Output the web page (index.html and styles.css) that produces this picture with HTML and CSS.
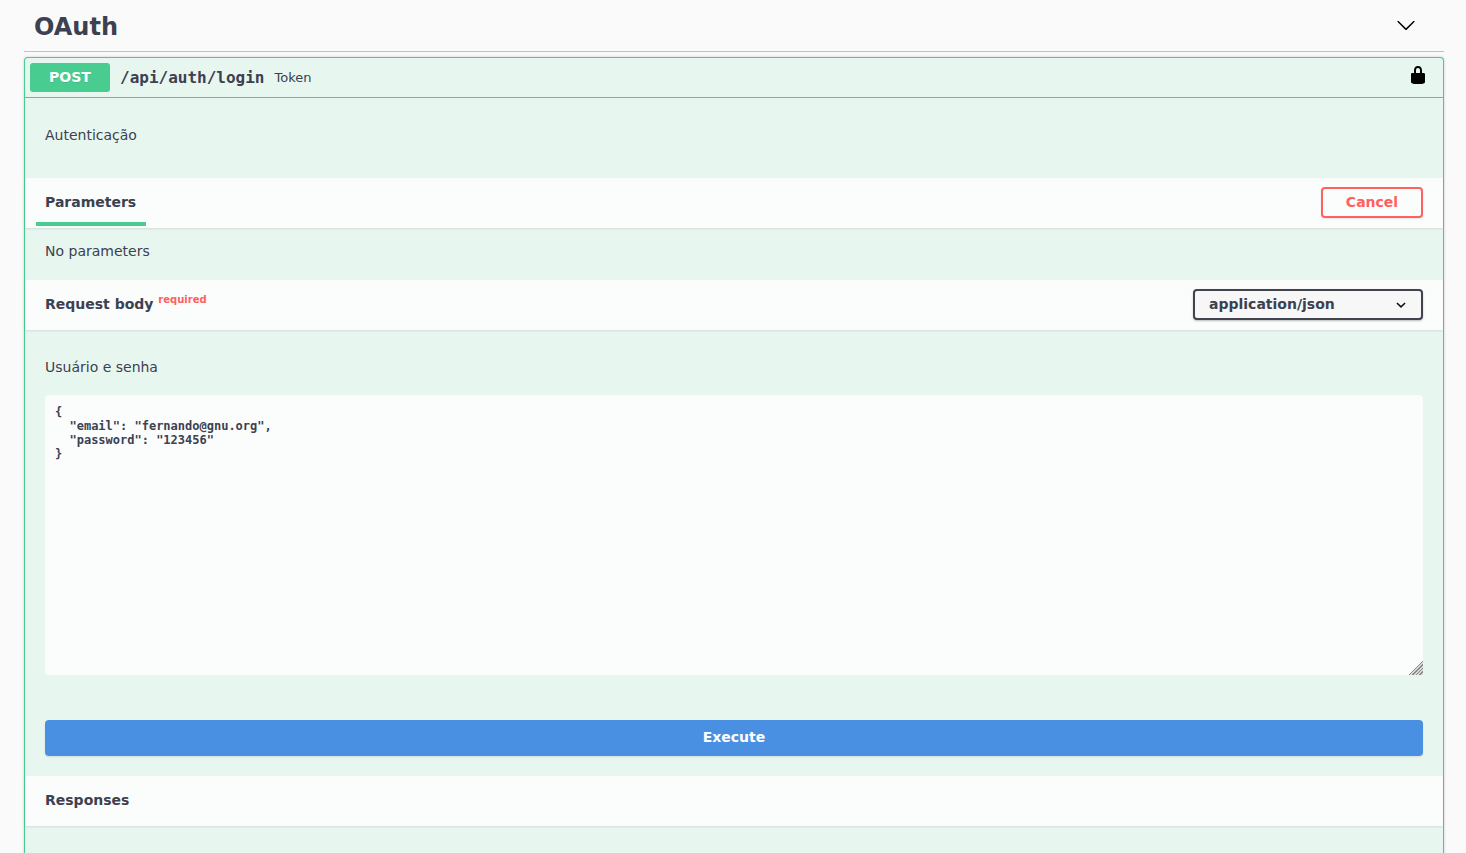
FILE: index.html
```html
<!DOCTYPE html>
<html lang="pt">
<head>
<meta charset="utf-8">
<title>OAuth</title>
<link rel="stylesheet" href="styles.css">
</head>
<body>
<main class="wrapper">
  <header class="tag">
    <h3 class="tag-title">OAuth</h3>
    <svg class="tag-arrow" viewBox="0 0 20 20" width="20" height="20"><path d="M17.418 6.109c.272-.268.709-.268.979 0s.271.701 0 .969l-7.908 7.83c-.27.268-.707.268-.979 0l-7.908-7.83c-.27-.268-.27-.701 0-.969.271-.268.709-.268.979 0L10 13.25l7.418-7.141z"/></svg>
  </header>
  <section class="opblock">
    <div class="summary">
      <span class="method">POST</span>
      <span class="path">/api/auth/login</span>
      <span class="summary-desc">Token</span>
      <svg class="lock" viewBox="0 0 20 20" width="20" height="20"><path d="M15.8 8H14V5.6C14 2.703 12.665 1 10 1 7.334 1 6 2.703 6 5.6V8H4c-.553 0-1 .646-1 1.199V17c0 .549.428 1.139.951 1.307l1.197.387C5.672 18.861 6.55 19 7.1 19h5.8c.549 0 1.428-.139 1.951-.307l1.196-.387c.524-.167.953-.757.953-1.306V9.199C17 8.646 16.352 8 15.8 8zM12 8H8V5.199C8 3.754 8.797 3 10 3c1.203 0 2 .754 2 2.199V8z"/></svg>
    </div>
    <p class="op-desc">Autenticação</p>
    <div class="section-header">
      <span class="tab">Parameters</span>
      <button class="cancel" type="button">Cancel</button>
    </div>
    <p class="no-params">No parameters</p>
    <div class="section-header body-header">
      <h4 class="section-title">Request body <sup class="required">required</sup></h4>
      <div class="select"><span>application/json</span>
        <svg viewBox="0 0 12 12" width="12" height="12"><path d="M1.9 4 6 7.9 10.100 4" fill="none" stroke="#111" stroke-width="1.5"/></svg>
      </div>
    </div>
    <div class="body-area">
      <p class="body-desc">Usuário e senha</p>
      <textarea class="body-input" spellcheck="false">{
  "email": "fernando@gnu.org",
  "password": "123456"
}</textarea>
      <button class="execute" type="button">Execute</button>
    </div>
    <div class="section-header responses">
      <h4 class="section-title">Responses</h4>
    </div>
    <div class="tail"></div>
  </section>
</main>
</body>
</html>
```
FILE: styles.css
```css
* { box-sizing: border-box; }
html, body { height: 853px; overflow: hidden; }
body {
  margin: 0;
  background: #fafafa;
  color: #3b4151;
  font-family: "DejaVu Sans", sans-serif;
  font-size: 14px;
}
.wrapper { padding: 0 22px 0 24px; }
.tag {
  display: flex;
  align-items: flex-start;
  justify-content: space-between;
  height: 52px;
  padding: 0 28px 0 10px;
  border-bottom: 1px solid rgba(59, 65, 81, .3);
}
.tag-title { margin: 0; padding-top: 1px; font-size: 24px; font-weight: 700; line-height: 52px; height: 51px; }
.tag-arrow { display: block; margin-top: 15px; }
.opblock {
  margin-top: 5px;
  background: #e8f6f0;
  border: 1px solid #49cc90;
  border-bottom: 0;
  border-radius: 4px 4px 0 0;
  box-shadow: 0 0 3px rgba(0, 0, 0, .19);
  height: 800px;
}
.summary {
  display: flex;
  align-items: center;
  height: 40px;
  padding: 0 15px 0 5px;
  border-bottom: 1px solid #49cc90;
}
.method {
  width: 80px;
  height: 29px;
  background: #49cc90;
  border-radius: 3px;
  color: #fff;
  font-size: 14px;
  font-weight: 700;
  line-height: 29px;
  text-align: center;
  text-shadow: 0 1px 0 rgba(0, 0, 0, .1);
}
.path {
  padding: 0 10px;
  font-family: "DejaVu Sans Mono", monospace;
  font-size: 16px;
  font-weight: 600;
}
.summary-desc { font-size: 13px; }
.lock { margin: -6px 0 0 auto; display: block; }
.op-desc { margin: 0; height: 80px; padding: 29px 20px 0; line-height: 17px; }
.section-header {
  display: flex;
  align-items: flex-start;
  justify-content: space-between;
  height: 50px;
  padding: 0 20px;
  background: rgba(255, 255, 255, .8);
  box-shadow: 0 1px 2px rgba(0, 0, 0, .1);
}
.tab {
  width: 110px;
  margin-left: -9px;
  padding: 16px 0 0 9px;
  border-bottom: 4px solid #49cc90;
  height: 48px;
  font-weight: 700;
  line-height: 17px;
}
.cancel {
  width: 102px;
  height: 31px;
  margin-top: 9px;
  padding: 0 0 2px;
  background: transparent;
  border: 2px solid #ff6060;
  border-radius: 4px;
  box-shadow: 0 1px 2px rgba(0, 0, 0, .1);
  color: #ff6060;
  font: 700 14px "DejaVu Sans", sans-serif;
}
.no-params { margin: 0; height: 52px; padding: 15px 20px 0; line-height: 17px; }
.section-title { margin: 16px 0 0; font-size: 14px; font-weight: 700; line-height: 17px; }
.required {
  position: relative;
  top: -1px;
  color: #ff6060;
  font-size: 10px;
  font-weight: 700;
  line-height: 0;
  vertical-align: 5px;
}
.select {
  display: flex;
  align-items: center;
  justify-content: space-between;
  width: 230px;
  height: 31px;
  margin-top: 9px;
  padding: 0 14px 2px;
  background: #f7f7f7;
  border: 2px solid #41444e;
  border-radius: 4px;
  box-shadow: 0 1px 2px rgba(0, 0, 0, .25);
  font-weight: 700;
}
.select svg { display: block; margin-top: 2px; }
.body-area { height: 446px; padding: 29px 20px 0; }
.body-desc { margin: 0 0 19px; line-height: 17px; height: 17px; }
.body-input {
  display: block;
  width: 100%;
  height: 280px;
  padding: 10px;
  background: rgba(255, 255, 255, .8);
  border: 0;
  border-radius: 4px;
  outline: 0;
  color: #3b4151;
  font-family: "DejaVu Sans Mono", monospace;
  font-size: 12px;
  font-weight: 600;
  line-height: 14px;
}
.body-input::-webkit-resizer {
  background:
    linear-gradient(135deg, #fbfdfc 52%, transparent 52%),
    repeating-linear-gradient(135deg, #8a8a8a 0 1.2px, #d8d8d8 1.2px 2.6px);
}
.execute {
  display: block;
  width: 100%;
  height: 36px;
  margin-top: 45px;
  padding: 0 0 2px;
  background: #4990e2;
  border: 0;
  border-radius: 4px;
  box-shadow: 0 1px 2px rgba(0, 0, 0, .1);
  color: #fff;
  font: 700 14px "DejaVu Sans", sans-serif;
}
.tail { height: 40px; }
```
